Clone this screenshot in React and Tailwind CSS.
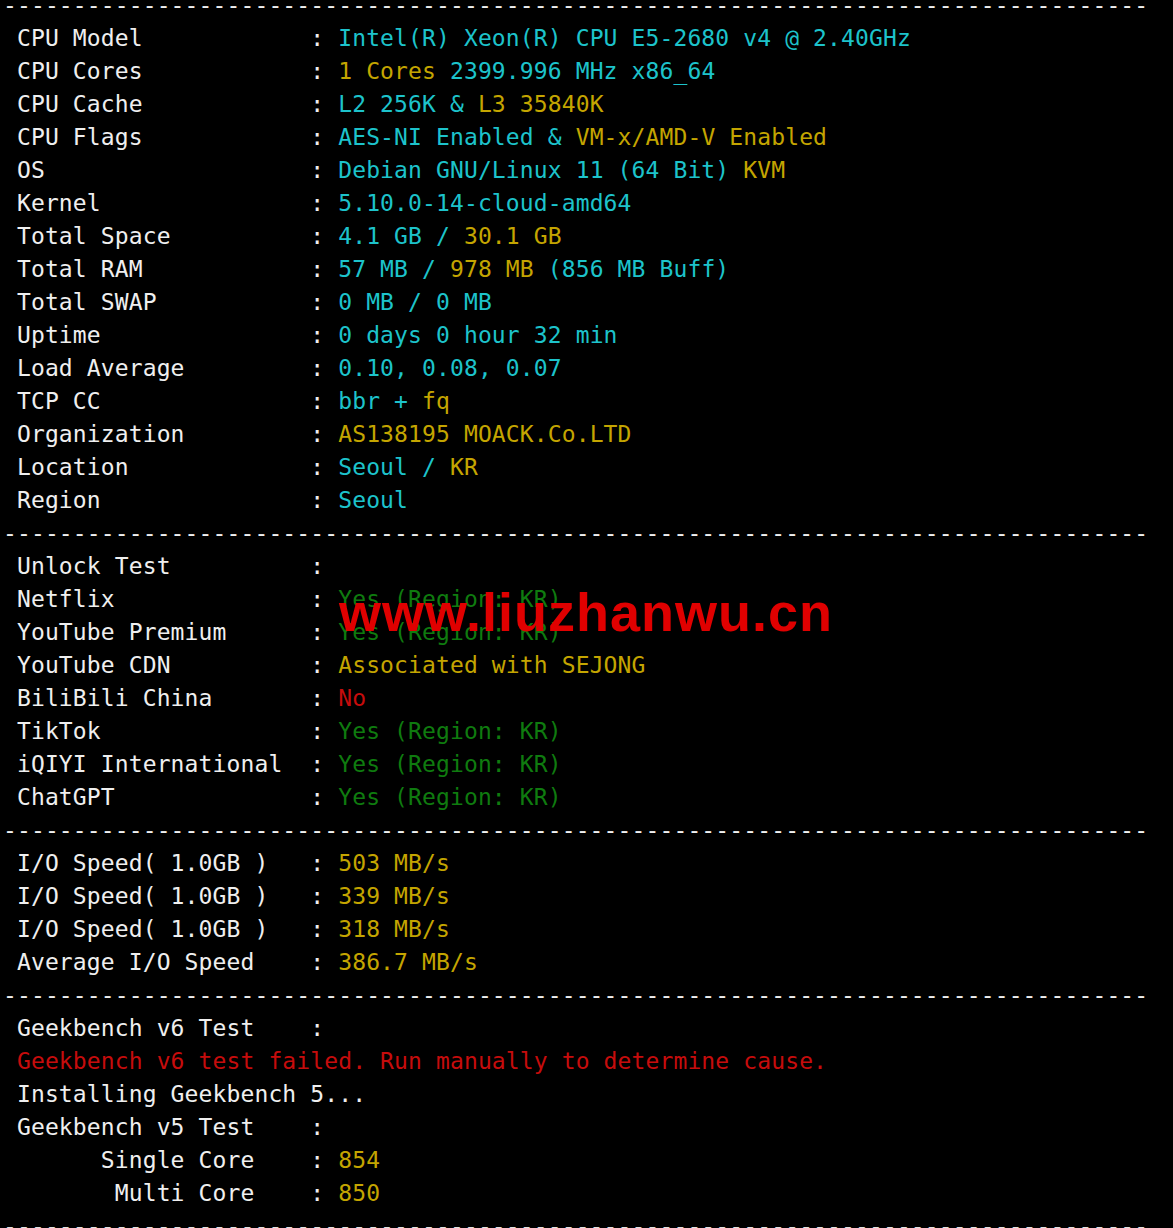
const C = {
  w: "text-[#efefef]",
  c: "text-[#1dc3cb]",
  y: "text-[#c4a500]",
  g: "text-[#0f7b0f]",
  r: "text-[#c60c0c]",
};

const DASHES = "-".repeat(82);

const info = [
  ["CPU Model", [["c", "Intel(R) Xeon(R) CPU E5-2680 v4 @ 2.40GHz"]]],
  ["CPU Cores", [["y", "1 Cores"], ["c", " 2399.996 MHz x86_64"]]],
  ["CPU Cache", [["c", "L2 256K & "], ["y", "L3 35840K"]]],
  ["CPU Flags", [["c", "AES-NI Enabled & "], ["y", "VM-x/AMD-V Enabled"]]],
  ["OS", [["c", "Debian GNU/Linux 11 (64 Bit) "], ["y", "KVM"]]],
  ["Kernel", [["c", "5.10.0-14-cloud-amd64"]]],
  ["Total Space", [["c", "4.1 GB / "], ["y", "30.1 GB"]]],
  ["Total RAM", [["c", "57 MB / "], ["y", "978 MB"], ["c", " (856 MB Buff)"]]],
  ["Total SWAP", [["c", "0 MB / 0 MB"]]],
  ["Uptime", [["c", "0 days 0 hour 32 min"]]],
  ["Load Average", [["c", "0.10, 0.08, 0.07"]]],
  ["TCP CC", [["c", "bbr + "], ["y", "fq"]]],
  ["Organization", [["y", "AS138195 MOACK.Co.LTD"]]],
  ["Location", [["c", "Seoul / "], ["y", "KR"]]],
  ["Region", [["c", "Seoul"]]],
];

const unlock = [
  ["Unlock Test", []],
  ["Netflix", [["g", "Yes (Region: KR)"]]],
  ["YouTube Premium", [["g", "Yes (Region: KR)"]]],
  ["YouTube CDN", [["y", "Associated with SEJONG"]]],
  ["BiliBili China", [["r", "No"]]],
  ["TikTok", [["g", "Yes (Region: KR)"]]],
  ["iQIYI International", [["g", "Yes (Region: KR)"]]],
  ["ChatGPT", [["g", "Yes (Region: KR)"]]],
];

const io = [
  ["I/O Speed( 1.0GB )", [["y", "503 MB/s"]]],
  ["I/O Speed( 1.0GB )", [["y", "339 MB/s"]]],
  ["I/O Speed( 1.0GB )", [["y", "318 MB/s"]]],
  ["Average I/O Speed", [["y", "386.7 MB/s"]]],
];

function Line({ children }) {
  return <div className="h-[33px] whitespace-pre">{children}</div>;
}

function Dashes() {
  return <Line>{DASHES}</Line>;
}

function Row({ label, parts }) {
  return (
    <Line>
      <span className={C.w}>{" " + label.padEnd(21, " ") + ": "}</span>
      {parts.map(([col, text], i) => (
        <span key={i} className={C[col]}>
          {text}
        </span>
      ))}
    </Line>
  );
}

export default function App() {
  return (
    <div className="relative h-[1228px] w-[1173px] overflow-hidden bg-black">
      <div
        className="-mt-[11.5px] pl-[3px] text-[23px] leading-[33px] tracking-[0.12px] text-[#efefef]"
        style={{ fontFamily: '"DejaVu Sans Mono", "Liberation Mono", monospace' }}
      >
        <Dashes />
        {info.map(([l, p], i) => (
          <Row key={i} label={l} parts={p} />
        ))}
        <Dashes />
        {unlock.map(([l, p], i) => (
          <Row key={i} label={l} parts={p} />
        ))}
        <Dashes />
        {io.map(([l, p], i) => (
          <Row key={i} label={l} parts={p} />
        ))}
        <Dashes />
        <Row label="Geekbench v6 Test" parts={[]} />
        <Line>
          <span className={C.r}>{" Geekbench v6 test failed. Run manually to determine cause."}</span>
        </Line>
        <Line>{" Installing Geekbench 5..."}</Line>
        <Row label="Geekbench v5 Test" parts={[]} />
        <Row label="      Single Core" parts={[["y", "854"]]} />
        <Row label="       Multi Core" parts={[["y", "850"]]} />
        <Dashes />
      </div>

      {/* watermark over the unlock block */}
      <div
        className="absolute left-[339px] top-[585px] text-[54px] font-bold leading-none tracking-[1px] text-[#e00000]"
        style={{ fontFamily: '"Liberation Sans", Arial, sans-serif' }}
      >
        www.liuzhanwu.cn
      </div>
    </div>
  );
}
